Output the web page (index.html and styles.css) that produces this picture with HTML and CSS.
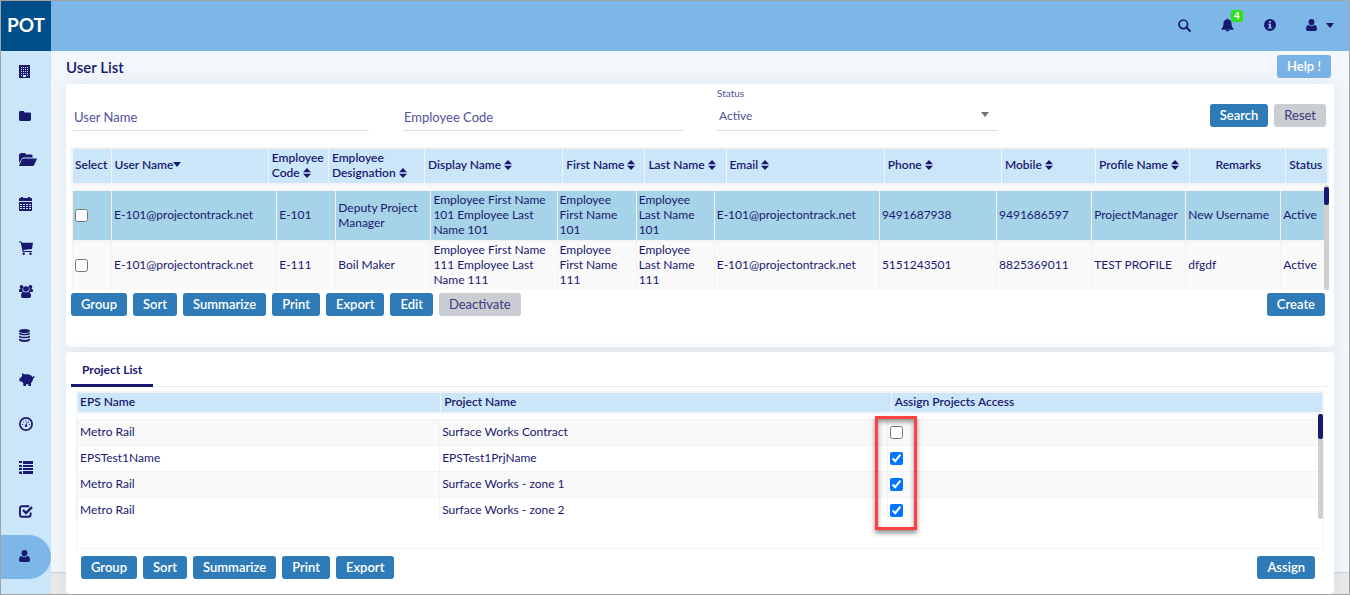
FILE: index.html
```html
<!DOCTYPE html>
<html lang="en">
<head>
<meta charset="utf-8">
<title>User List</title>
<link rel="stylesheet" href="styles.css">
</head>
<body>
<svg class="defs" aria-hidden="true">
  <symbol id="sort" viewBox="0 0 8 10"><path d="M4 0 8 4.2H0zM0 5.8h8L4 10z"/></symbol>
  <symbol id="down" viewBox="0 0 8 5"><path d="M0 0h8L4 5z"/></symbol>
  <symbol id="user" viewBox="0 0 12 13"><path d="M6 0a3.3 3.3 0 0 1 3.2 3.3C9.200 5.300 7.800 7 6 7S2.800 5.300 2.800 3.300A3.300 3.300 0 0 1 6 0zM3.200 6.400C4 7.300 5 7.800 6 7.800s2-.5 2.800-1.400C10.800 6.500 12 8 12 10.800 12 12 11.200 13 10 13H2c-1.200 0-2-1-2-2.200C0 8 1.200 6.500 3.200 6.400z"/></symbol>
</svg>
<header class="topbar">
  <a class="brand" href="#">POT</a>
  <nav class="tools" aria-label="Account">
    <button class="tool" aria-label="Search"><svg width="13" height="13" viewBox="0 0 13 13"><circle cx="5.300" cy="5.300" r="4.300" fill="none" stroke="currentColor" stroke-width="1.700"/><path d="m8.500 8.500 3.500 3.500" stroke="currentColor" stroke-width="1.900" stroke-linecap="round"/></svg></button>
    <button class="tool" aria-label="Notifications"><svg width="13" height="14" viewBox="0 0 14 14"><path d="M7 0c.7 0 1 .4 1 1.100 2 .4 3.300 2 3.300 4.100 0 3 .7 4.500 2.200 5.800.4.500.1 1-.5 1H1c-.6 0-.9-.5-.5-1C2 9.700 2.700 8.200 2.700 5.200 2.700 3.100 4 1.500 6 1.100 6 .4 6.300 0 7 0zM5 12.400h4a2 1.600 0 0 1-4 0z"/></svg><span class="badge">4</span></button>
    <button class="tool" aria-label="Information"><svg width="12" height="12" viewBox="0 0 12 12"><path fill-rule="evenodd" d="M6 0a6 6 0 1 1 0 12A6 6 0 0 1 6 0zM5 2v1.700h2V2zM4 4.700v1h1v2.600H4v1.200h4V8.300H7V4.700z"/></svg></button>
    <button class="tool account" aria-label="Account menu"><svg width="11" height="12"><use href="#user"/></svg><svg width="8" height="5"><use href="#down"/></svg></button>
  </nav>
</header>
<div class="shell">
  <nav class="sidebar" aria-label="Main">
    <a href="#" aria-label="Company"><svg width="11" height="13" viewBox="0 0 11 13"><path fill-rule="evenodd" d="M0 0h11v13H0zM2 2v1h1V2zm2 0v1h1V2zm2 0v1h1V2zm2 0v1h1V2zM2 4v1h1V4zm2 0v1h1V4zm2 0v1h1V4zm2 0v1h1V4zM2 6v1h1V6zm2 0v1h1V6zm2 0v1h1V6zm2 0v1h1V6zM2 8v1h1V8zm2 0v1h1V8zm2 0v1h1V8zm2 0v1h1V8zM2 10v1h1v-1zm6 0v1h1v-1zM4 10v2h3v-2z"/></svg></a>
    <a href="#" aria-label="Folder"><svg width="12" height="10" viewBox="0 0 12 10"><path d="M0 1.500C0 .6.600 0 1.500 0h2.600c.8 0 1.400.6 1.400 1.400h5C11.400 1.400 12 2 12 2.900v5.600c0 .9-.6 1.500-1.500 1.500h-9C.6 10 0 9.400 0 8.500z"/></svg></a>
    <a href="#" aria-label="Projects"><svg width="18" height="13" viewBox="0 0 18 13"><path d="M0 10V2C0 1 .7.400 1.500.400L2 0h3.600c.8 0 1.200.600 1.200 1.400H12c1 0 1.600.6 1.600 1.500V4.400H4.500c-.7 0-1.300.3-1.700 1zM4.300 5.400H17.600c.4 0 .5.300.3.700l-2.700 6c-.3.600-.9.900-1.500.9H.6c-.5 0-.6-.3-.4-.7l2.700-6.100c.3-.5.800-.8 1.400-.8z"/></svg></a>
    <a href="#" aria-label="Calendar"><svg width="13" height="14" viewBox="0 0 13 14"><path fill-rule="evenodd" d="M2 0h2v1h5V0h2v1h1c.6 0 1 .4 1 1v11c0 .6-.4 1-1 1H1c-.6 0-1-.4-1-1V2c0-.6.4-1 1-1h1zM0 4v1h13V4zM1 7v1h2V7zm3 0v1h2V7zm3 0v1h2V7zm3 0v1h2V7zM1 9v1h2V9zm3 0v1h2V9zm3 0v1h2V9zm3 0v1h2V9zm-9 2v1h2v-1zm3 0v1h2v-1zm3 0v1h2v-1zm3 0v1h2v-1z"/></svg></a>
    <a href="#" aria-label="Procurement"><svg width="14" height="14" viewBox="0 0 14 14"><path d="M0 .5h2.500l.5 1.200h11l-1 6.300-8.600 1 .2 1H13v1.100H3.500L3.400 9.900 1.800 1.500H0z"/><circle cx="4.700" cy="12.700" r="1.200"/><circle cx="11.500" cy="12.700" r="1.200"/></svg></a>
    <a href="#" aria-label="Teams"><svg width="14" height="13" viewBox="0 0 14 13"><circle cx="2.600" cy="2" r="1.900"/><circle cx="11.400" cy="2" r="1.900"/><circle cx="7" cy="4" r="2.800"/><path d="M0 6c0-1.400.5-2 1.200-2h2.300c-.2 1.400.2 2.300.9 3H1C.4 7 0 6.600 0 6zM14 6c0-1.400-.5-2-1.200-2h-2.300c.2 1.400-.2 2.300-.9 3H13c.6 0 1-.4 1-1zM4.500 6.800c1.600 1 3.400 1 5 0 1.700.3 2.500 1.700 2.500 4.200 0 1.200-.7 2-1.800 2H3.800C2.700 13 2 12.200 2 11c0-2.500.8-3.900 2.500-4.200z"/></svg></a>
    <a href="#" aria-label="Data"><svg width="11" height="13" viewBox="0 0 11 13"><ellipse cx="5.500" cy="2" rx="5.500" ry="2"/><path d="M0 3.500c2 1.700 9 1.700 11 0v1.200c0 2.200-11 2.200-11 0zM0 6.500c2 1.700 9 1.700 11 0v1.200c0 2.200-11 2.200-11 0zM0 9.600c2 1.700 9 1.700 11 0V11c0 2.600-11 2.600-11 0z"/></svg></a>
    <a href="#" aria-label="Budget"><svg width="16" height="13" viewBox="0 0 16 13"><path d="M3 0 6 1.600C8.500.6 12 1.200 13.400 4c.8.100 1.100-.2 1-.9l.7-.1c.9 1.200.2 2.300-1.100 2.500 0 2-.7 3.400-2 4.500V13H9.500v-1.700H7V13H4.300v-2.800L2.700 8.500H.500V5h1l1.700-2.200z"/></svg></a>
    <a href="#" aria-label="Dashboard"><svg width="14" height="14" viewBox="0 0 14 14"><circle cx="7" cy="7" r="6.100" fill="none" stroke="currentColor" stroke-width="1.700"/><circle cx="7" cy="8.700" r="1.200"/><path d="m7 8.500 1.200-3.500" stroke="currentColor" stroke-width=".8"/><circle cx="3.700" cy="7.300" r=".6"/><circle cx="4.800" cy="4.800" r=".6"/><circle cx="7" cy="3.800" r=".6"/><circle cx="9.600" cy="4.900" r=".6"/><circle cx="10.400" cy="7.300" r=".6"/></svg></a>
    <a href="#" aria-label="Lists"><svg width="14" height="13" viewBox="0 0 14 13"><path d="M0 0h3v2H0zM4 0h10v3H4zM0 4h3v2H0zm4 0h10v2H4zM0 7h3v2H0zm4 0h10v2H4zM0 10.500h3V13H0zm4-.5h10v3H4z"/></svg></a>
    <a href="#" aria-label="Tasks"><svg width="14" height="13" viewBox="0 0 14 13"><path d="M10.200 1.200H3A2 2 0 0 0 1 3.200v6.600a2 2 0 0 0 2 2h6.600a2 2 0 0 0 2-2V7.600" fill="none" stroke="currentColor" stroke-width="1.900"/><path d="m4 5 3 3 6-6" fill="none" stroke="currentColor" stroke-width="2.300"/></svg></a>
    <a class="current" href="#" aria-label="Users" aria-current="page"><svg width="11" height="12"><use href="#user"/></svg></a>
  </nav>
  <main class="main">
    <div class="page-head">
      <h1>User List</h1>
      <button class="btn btn-help">Help !</button>
    </div>
    <section class="card users" aria-label="Users">
      <form class="filters">
        <input class="field" type="text" placeholder="User Name" aria-label="User Name">
        <input class="field" type="text" placeholder="Employee Code" aria-label="Employee Code">
        <div class="status">
          <label for="status">Status</label>
          <select class="field" id="status"><option>Active</option><option>Inactive</option></select>
          <svg class="arrow" width="8" height="5"><use href="#down"/></svg>
        </div>
        <div class="filter-actions">
          <button class="btn" type="button">Search</button>
          <button class="btn btn-muted" type="reset">Reset</button>
        </div>
      </form>
      <div class="grid">
        <table class="head user-head">
          <colgroup><col><col><col><col><col><col><col><col><col><col><col><col><col></colgroup>
          <thead><tr>
            <th>Select</th>
            <th>User Name<svg class="sorted" width="8" height="5"><use href="#down"/></svg></th>
            <th>Employee Code <svg width="8" height="10"><use href="#sort"/></svg></th>
            <th>Employee Designation <svg width="8" height="10"><use href="#sort"/></svg></th>
            <th>Display Name <svg width="8" height="10"><use href="#sort"/></svg></th>
            <th>First Name <svg width="8" height="10"><use href="#sort"/></svg></th>
            <th>Last Name <svg width="8" height="10"><use href="#sort"/></svg></th>
            <th>Email <svg width="8" height="10"><use href="#sort"/></svg></th>
            <th>Phone <svg width="8" height="10"><use href="#sort"/></svg></th>
            <th>Mobile <svg width="8" height="10"><use href="#sort"/></svg></th>
            <th>Profile Name <svg width="8" height="10"><use href="#sort"/></svg></th>
            <th class="center">Remarks</th>
            <th>Status</th>
          </tr></thead>
        </table>
        <div class="scroll">
          <table class="rows user-rows">
            <colgroup><col><col><col><col><col><col><col><col><col><col><col><col><col></colgroup>
            <tbody>
              <tr class="selected"><td><input type="checkbox" aria-label="Select E-101"></td><td>E-101@projectontrack.net</td><td>E-101</td><td>Deputy Project Manager</td><td>Employee First Name 101 Employee Last Name 101</td><td>Employee First Name 101</td><td>Employee Last Name 101</td><td>E-101@projectontrack.net</td><td>9491687938</td><td>9491686597</td><td>ProjectManager</td><td>New Username</td><td>Active</td></tr>
              <tr><td><input type="checkbox" aria-label="Select E-111"></td><td>E-101@projectontrack.net</td><td>E-111</td><td>Boil Maker</td><td>Employee First Name 111 Employee Last Name 111</td><td>Employee First Name 111</td><td>Employee Last Name 111</td><td>E-101@projectontrack.net</td><td>5151243501</td><td>8825369011</td><td>TEST PROFILE</td><td>dfgdf</td><td>Active</td></tr>
            </tbody>
          </table>
          <div class="track"><div class="thumb"></div></div>
        </div>
      </div>
      <div class="actions">
        <button class="btn">Group</button><button class="btn">Sort</button><button class="btn">Summarize</button><button class="btn">Print</button><button class="btn">Export</button><button class="btn">Edit</button><button class="btn btn-muted">Deactivate</button>
        <button class="btn last">Create</button>
      </div>
    </section>
    <section class="card projects" aria-label="Projects">
      <div class="tabs"><button class="tab">Project List</button></div>
      <div class="grid project-grid">
        <table class="head project-head">
          <colgroup><col><col><col></colgroup>
          <thead><tr><th>EPS Name</th><th>Project Name</th><th>Assign Projects Access</th></tr></thead>
        </table>
        <div class="scroll">
          <table class="rows project-rows">
            <colgroup><col><col><col></colgroup>
            <tbody>
              <tr><td>Metro Rail</td><td>Surface Works Contract</td><td><input type="checkbox" aria-label="Surface Works Contract"></td></tr>
              <tr><td>EPSTest1Name</td><td>EPSTest1PrjName</td><td><input type="checkbox" checked aria-label="EPSTest1PrjName"></td></tr>
              <tr><td>Metro Rail</td><td>Surface Works - zone 1</td><td><input type="checkbox" checked aria-label="Surface Works - zone 1"></td></tr>
              <tr><td>Metro Rail</td><td>Surface Works - zone 2</td><td><input type="checkbox" checked aria-label="Surface Works - zone 2"></td></tr>
            </tbody>
          </table>
          <div class="track"><div class="thumb"></div></div>
        </div>
        <div class="highlight"></div>
      </div>
      <div class="actions">
        <button class="btn">Group</button><button class="btn">Sort</button><button class="btn">Summarize</button><button class="btn">Print</button><button class="btn">Export</button>
        <button class="btn last">Assign</button>
      </div>
    </section>
    <footer class="footer"></footer>
  </main>
</div>
</body>
</html>
```

FILE: styles.css
```css
* { box-sizing: border-box; }
body {
  margin: 0;
  min-height: 100vh;
  border: 1px solid #a3a3a3;
  display: flex;
  flex-direction: column;
  font: 12px/15px Lato, "Liberation Sans", sans-serif;
  color: #191970;
  background: #f1f7fa;
}
.defs { position: absolute; width: 0; height: 0; }
svg { fill: currentColor; }
a { color: inherit; text-decoration: none; }
button, input, select { font: inherit; color: inherit; }

.topbar { display: flex; height: 50px; background: #7cb7e8; }
.brand {
  display: grid;
  place-items: center;
  width: 50px;
  padding-bottom: 4px;
  background: #004e89;
  color: #fff;
  font-size: 19px;
  font-weight: 700;
}
.tools { display: flex; align-items: center; margin-left: auto; padding: 0 15px 2px 0; gap: 30px; }
.tool { position: relative; display: flex; align-items: center; border: 0; padding: 0; background: none; }
.account { gap: 9px; }
.badge {
  position: absolute;
  left: 10px;
  top: -8px;
  width: 12px;
  height: 12px;
  border-radius: 2px;
  background: #3d2;
  color: #fff;
  font-size: 10px;
  line-height: 11px;
  font-weight: 700;
  text-align: center;
}

.shell { display: flex; flex: 1; }
.sidebar { flex: none; width: 50px; background: #cbe6f9; }
.sidebar a { display: flex; align-items: center; height: 44px; padding: 0 0 3px 18px; }
.sidebar .current { background: #7cb7e8; border-radius: 0 22px 22px 0; }

.main { position: relative; flex: 1; min-width: 0; padding: 4px 15px 0; overflow: hidden; }
.page-head { display: flex; justify-content: space-between; height: 29px; padding-right: 3px; }
h1 { margin: 0; font-size: 15px; line-height: 24px; font-weight: 600; }
.card {
  position: relative;
  z-index: 1;
  border-radius: 4px;
  background: #fff;
  box-shadow: 0 0 20px rgba(0, 0, 0, .07);
}

.btn {
  height: 23px;
  padding: 0 10px;
  border: 0;
  border-radius: 3px;
  background: #2f7bb7;
  color: #fff;
  font-size: 13px;
  line-height: 23px;
  font-weight: 600;
}
.btn-muted { background: #cacdd2; color: #3a3a7a; font-weight: 400; }
.btn-help { background: #7ab3e6; }

.filters { display: flex; align-items: flex-end; gap: 34px; height: 47px; padding: 0 8px 0 7px; }
.field {
  display: block;
  height: 26px;
  width: 296px;
  min-width: 0;
  padding: 0 1px 1px;
  border: 0;
  border-bottom: 1px solid #dcdcdc;
  border-radius: 0;
  background: none;
  font-size: 13px;
  color: #53539a;
  appearance: none;
}
.field::placeholder { color: #53539a; opacity: 1; }
.field + .field { width: 280px; }
.status { position: relative; display: flex; flex-direction: column; gap: 6px; }
.status label { font-size: 10px; line-height: 12px; color: #53539a; }
.status .field { width: 281px; padding: 0 2px 4px; font-size: 12px; }
.arrow { position: absolute; right: 9px; bottom: 14px; color: #757575; pointer-events: none; }
.filter-actions { display: flex; gap: 6px; margin-left: auto; padding-bottom: 4px; }

table { width: 100%; border-collapse: collapse; table-layout: fixed; }
th, td { padding: 0 2px 2px; text-align: left; vertical-align: middle; }
th { padding-left: 3px; border-left: 1px solid #f4f4f4; background: #cbe6f9; font-weight: 600; }
th:first-child { padding-left: 2px; border-left: 0; }
th.center { text-align: center; }
td { border-left: 1px solid #f2f2f2; border-top: 1px solid #f2f2f2; }
th svg { vertical-align: -1px; }
th .sorted { vertical-align: 2px; }
input[type="checkbox"] { display: block; width: 13px; height: 13px; margin: 0; accent-color: #0075ff; }
.head { border: 2px solid #f3f3f3; }
.scroll { display: flex; height: 105px; overflow: hidden; }
.rows { flex: 1; width: auto; margin-top: 5px; align-self: flex-start; }
.rows tr:nth-child(odd) { background: #f9f9f9; }
.track { flex: none; width: 5px; border-radius: 3px; background: #cfcfcf; }
.thumb { width: 5px; border-radius: 2px; background: #191970; }

.users { padding-bottom: 31px; }
.users .grid { margin: 16px 5px 0 5px; }
.user-head tr { height: 36px; }
.user-head th { padding-bottom: 3px; }
.user-rows tr { height: 50px; }
.user-rows td:first-child { padding-bottom: 0; }
.users .user-rows .selected { background: #a6d3e7; }
.users .scroll { padding-left: 1px; background: #f9f9f9; }
.users .thumb { height: 18px; margin-top: 2px; }
.user-head col:nth-child(1) { width: 39px; }
.user-head col:nth-child(2) { width: 157px; }
.user-head col:nth-child(3) { width: 60px; }
.user-head col:nth-child(4) { width: 96px; }
.user-head col:nth-child(5) { width: 138px; }
.user-head col:nth-child(6) { width: 82px; }
.user-head col:nth-child(7) { width: 81px; }
.user-head col:nth-child(8) { width: 158px; }
.user-head col:nth-child(9) { width: 117px; }
.user-head col:nth-child(10) { width: 94px; }
.user-head col:nth-child(11) { width: 94px; }
.user-head col:nth-child(12) { width: 96px; }
.user-head col:nth-child(13) { width: 42px; }
.user-rows col:nth-child(1) { width: 39px; }
.user-rows col:nth-child(2) { width: 165px; }
.user-rows col:nth-child(3) { width: 59px; }
.user-rows col:nth-child(4) { width: 95px; }
.user-rows col:nth-child(5) { width: 126px; }
.user-rows col:nth-child(6) { width: 79px; }
.user-rows col:nth-child(7) { width: 78px; }
.user-rows col:nth-child(8) { width: 165px; }
.user-rows col:nth-child(9) { width: 117px; }
.user-rows col:nth-child(10) { width: 95px; }
.user-rows col:nth-child(11) { width: 94px; }
.user-rows col:nth-child(12) { width: 95px; }
.user-rows col:nth-child(13) { width: 43px; }

.actions { display: flex; gap: 6px; padding: 3px 9px 0 5px; }
.last { margin-left: auto; }

.projects { margin-top: 5px; padding-bottom: 15px; }
.tabs { display: flex; margin: 0 5px; box-shadow: inset 0 -1px #eee; height: 35px; }
.tab {
  padding: 2px 11px 0;
  border: 0;
  border-bottom: 3px solid #191970;
  background: none;
  font-weight: 700;
}
.project-grid { position: relative; height: 158px; margin: 4px 10px 0; border: 1px solid #f3f3f3; }
.project-head tr { height: 20px; }
.project-head { border-width: 1px 1px 2px; }
.project-rows tr { height: 26px; }
.project-rows td:last-child { padding-bottom: 0; }
.projects .thumb { height: 25px; }
.project-head col:nth-child(1) { width: 363px; }
.project-head col:nth-child(2) { width: 450px; }
.project-head col:nth-child(3) { width: 431px; }
.project-rows col:nth-child(1) { width: 362px; }
.project-rows col:nth-child(2) { width: 448px; }
.project-rows col:nth-child(3) { width: 430px; }
.projects .actions { padding: 7px 19px 0 15px; }
.highlight {
  position: absolute;
  right: 405px;
  right: calc(36% - 43px);
  top: 24px;
  width: 42px;
  height: 114px;
  border: 3px solid #fb4141;
  box-shadow: 0 3px 5px rgba(0, 0, 0, .45), inset 0 3px 5px rgba(0, 0, 0, .4);
  pointer-events: none;
}

.footer {
  position: absolute;
  left: 0;
  right: 0;
  bottom: 0;
  height: 22px;
  border-top: 1px solid #ccd3e0;
  background: #e9e9e9;
}
```
